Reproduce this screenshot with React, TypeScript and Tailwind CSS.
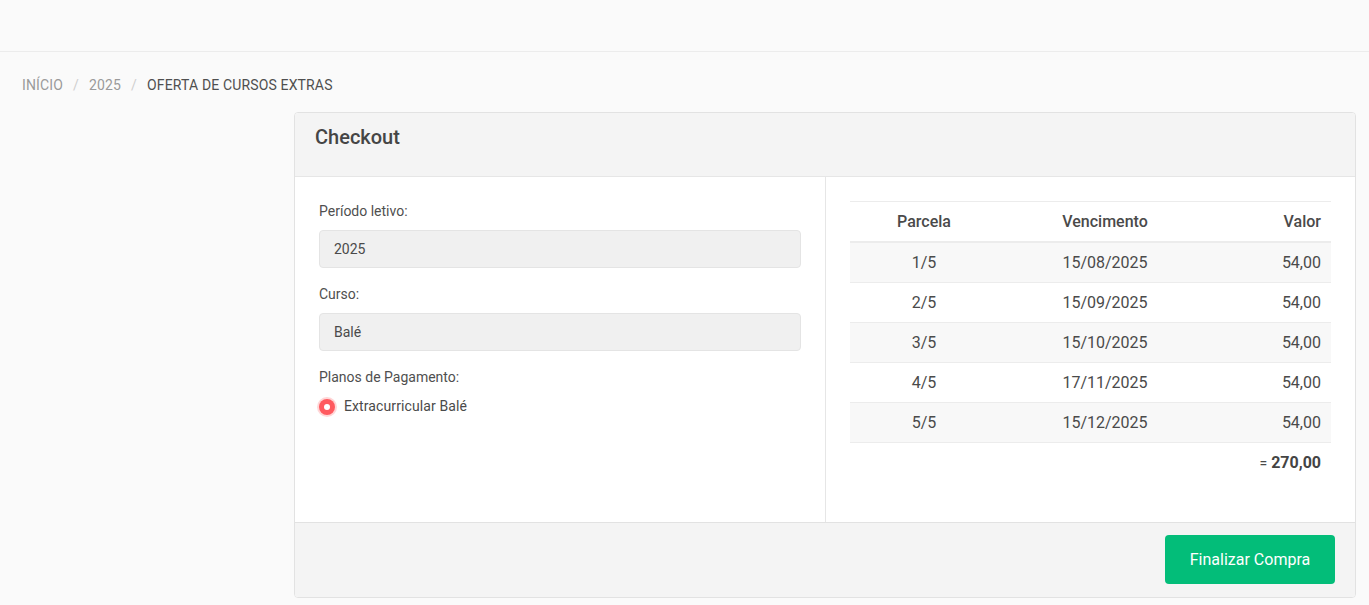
import React from "react";

const rows = [
  ["1/5", "15/08/2025", "54,00"],
  ["2/5", "15/09/2025", "54,00"],
  ["3/5", "15/10/2025", "54,00"],
  ["4/5", "17/11/2025", "54,00"],
  ["5/5", "15/12/2025", "54,00"],
];

export default function App() {
  return (
    <div
      className="min-h-[605px] bg-[#fafafa] text-[#4a4a4a]"
      style={{ fontFamily: "Roboto, 'Liberation Sans', sans-serif" }}
    >
      <header className="h-[52px] border-b border-[#ececec] bg-[#fafafa]" />
      <nav className="flex h-[60px] items-center gap-[10px] pl-[22px] pt-[6px] text-[14px] uppercase tracking-[0.15px]">
        <span className="text-[#9a9a9a]">Início</span>
        <span className="text-[#cfcfcf]">/</span>
        <span className="text-[#9a9a9a]">2025</span>
        <span className="text-[#cfcfcf]">/</span>
        <span className="text-[#4f4f4f]">Oferta de cursos extras</span>
      </nav>
      <div className="pl-[294px] pr-[13px]">
        <div className="overflow-hidden rounded-[4px] border border-[#e2e2e2] bg-white">
          <div className="h-[64px] border-b border-[#e6e6e6] bg-[#f4f4f4] px-[20px] pt-[9px]">
            <h1 className="text-[20px] font-medium text-[#454545]">Checkout</h1>
          </div>
          <div className="grid h-[345px] grid-cols-[531px_1fr]">
            <div className="border-r border-[#e6e6e6] px-[24px] pt-[24px] text-[14px]">
              <div className="leading-[20px] text-[#4f4f4f]">Período letivo:</div>
              <div className="mt-[9px] flex h-[38px] items-center rounded-[4px] border border-[#e4e4e4] bg-[#f0f0f0] px-[14px] text-[#4a4a4a]">
                2025
              </div>
              <div className="mt-[16px] leading-[20px] text-[#4f4f4f]">Curso:</div>
              <div className="mt-[9px] flex h-[38px] items-center rounded-[4px] border border-[#e4e4e4] bg-[#f0f0f0] px-[14px] text-[#4a4a4a]">
                Balé
              </div>
              <div className="mt-[16px] leading-[20px] text-[#4f4f4f]">Planos de Pagamento:</div>
              <label className="mt-[9px] flex items-center gap-[9px]">
                <span className="flex h-[16px] w-[16px] items-center justify-center rounded-full bg-[#ff5a5f] shadow-[0_0_0_2px_rgba(255,90,95,0.25)]">
                  <span className="h-[6px] w-[6px] rounded-full bg-white" />
                </span>
                <span className="text-[#4a4a4a] tracking-[0.1px]">Extracurricular Balé</span>
              </label>
            </div>
            <div className="px-[24px] pt-[24px] text-[16px]">
              <div className="border-t border-[#ececec]">
                <div className="grid h-[41px] grid-cols-[148px_214px_1fr] items-center border-b-2 border-[#ececec] font-medium text-[#4a4a4a]">
                  <div className="text-center">Parcela</div>
                  <div className="text-center">Vencimento</div>
                  <div className="pr-[10px] text-right">Valor</div>
                </div>
                {rows.map((r, i) => (
                  <div
                    key={r[0]}
                    className={`grid h-[40px] grid-cols-[148px_214px_1fr] items-center border-b border-[#ececec] ${
                      i % 2 === 0 ? "bg-[#f8f8f8]" : "bg-white"
                    }`}
                  >
                    <div className="text-center">{r[0]}</div>
                    <div className="text-center">{r[1]}</div>
                    <div className="pr-[10px] text-right">{r[2]}</div>
                  </div>
                ))}
                <div className="flex h-[40px] items-center justify-end pr-[10px]">
                  <span className="mr-[4px] text-[14px]">=</span>
                  <span className="font-bold text-[#444]">270,00</span>
                </div>
              </div>
            </div>
          </div>
          <div className="flex h-[75px] justify-end border-t border-[#e2e2e2] bg-[#f4f4f4] pr-[20px] pt-[12px]">
            <button className="h-[49px] w-[170px] rounded-[4px] bg-[#03bd79] text-[16px] text-white">
              Finalizar Compra
            </button>
          </div>
        </div>
      </div>
    </div>
  );
}
